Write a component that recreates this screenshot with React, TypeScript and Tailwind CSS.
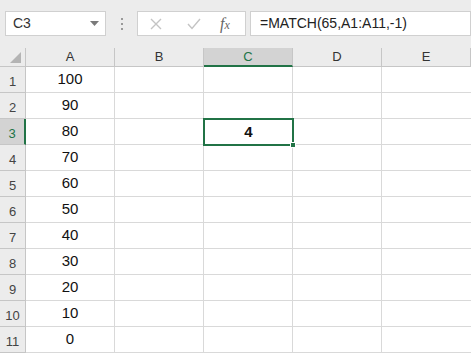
import React from 'react';

const cols = ['A', 'B', 'C', 'D', 'E'];
const values = ['100', '90', '80', '70', '60', '50', '40', '30', '20', '10', '0'];

const App: React.FC = () => {
  return (
    <div className="w-[471px] h-[353px] overflow-hidden bg-white text-[#222]" style={{ fontFamily: '"Liberation Sans", Arial, sans-serif' }}>
      {/* Formula bar */}
      <div className="h-[48px] bg-[#ececec] flex items-start pt-[11px]">
        <div className="ml-[5px] w-[101px] h-[25px] bg-white border border-[#d0d0d0] flex items-center justify-between pl-[7px] pr-[6px]">
          <span className="text-[14px] text-[#333]">C3</span>
          <svg width="9" height="5" viewBox="0 0 9 5">
            <path d="M0 0 L9 0 L4.5 5 Z" fill="#7a7a7a" />
          </svg>
        </div>
        <div className="w-[31px] h-[25px] flex flex-col items-center justify-center gap-[3px]">
          <span className="w-[2px] h-[2px] bg-[#999]" />
          <span className="w-[2px] h-[2px] bg-[#999]" />
          <span className="w-[2px] h-[2px] bg-[#999]" />
        </div>
        <div className="w-[109px] h-[25px] bg-white border border-[#d0d0d0] flex items-center">
          <svg className="ml-[12px]" width="12" height="12" viewBox="0 0 12 12">
            <path d="M1 1 L11 11 M11 1 L1 11" stroke="#c4c4c4" strokeWidth="1.4" />
          </svg>
          <svg className="ml-[25px]" width="14" height="12" viewBox="0 0 14 12">
            <path d="M1 6 L5 10.5 L13 1" stroke="#c4c4c4" strokeWidth="1.4" fill="none" />
          </svg>
          <span className="ml-[19px] text-[16px] italic text-[#666]" style={{ fontFamily: '"Liberation Serif", serif' }}>
            f<span className="text-[12px]">x</span>
          </span>
        </div>
        <div className="ml-[4px] flex-1 h-[25px] bg-white border border-[#d0d0d0] flex items-center pl-[9px]">
          <span className="text-[14px] text-[#222]">=MATCH(65,A1:A11,-1)</span>
        </div>
      </div>

      {/* Grid */}
      <div className="grid grid-cols-[26px_89px_89px_89px_89px_89px] grid-rows-[19px_repeat(11,26px)]">
        {/* corner */}
        <div className="bg-[#ececec] border-r border-b border-[#c6c6c6] relative">
          <svg className="absolute right-[4px] bottom-[3px]" width="11" height="11" viewBox="0 0 11 11">
            <path d="M11 0 L11 11 L0 11 Z" fill="#b4b4b4" />
          </svg>
        </div>
        {cols.map((c) => (
          <div
            key={c}
            className={
              c === 'C'
                ? 'bg-[#d3d3d3] border-r border-[#c6c6c6] border-b-2 border-b-[#217346] flex items-center justify-center text-[13px] text-[#217346]'
                : 'bg-[#ececec] border-r border-b border-[#c6c6c6] flex items-center justify-center text-[13px] text-[#333]'
            }
          >
            {c}
          </div>
        ))}
        {values.map((v, i) => (
          <React.Fragment key={i}>
            <div
              className={
                i === 2
                  ? 'bg-[#d3d3d3] border-r-2 border-r-[#217346] border-b border-[#c6c6c6] flex items-end justify-center pb-[1px] text-[13px] text-[#217346]'
                  : 'bg-[#ececec] border-r border-b border-[#c6c6c6] flex items-end justify-center pb-[1px] text-[13px] text-[#444]'
              }
            >
              {i + 1}
            </div>
            <div className="border-r border-b border-[#d9d9d9] flex items-center justify-center text-[15px] text-[#111]">{v}</div>
            <div className="border-r border-b border-[#d9d9d9]" />
            <div className="border-r border-b border-[#d9d9d9] relative">
              {i === 2 && (
                <div className="absolute -left-[1px] -top-[1px] w-[91px] h-[28px] border-2 border-[#217346] flex items-center justify-center text-[15px] font-bold text-[#111] z-10">
                  4
                  <span className="absolute -right-[4px] -bottom-[4px] w-[6px] h-[6px] bg-[#217346] border border-white" />
                </div>
              )}
            </div>
            <div className="border-r border-b border-[#d9d9d9]" />
            <div className="border-b border-[#d9d9d9]" />
          </React.Fragment>
        ))}
      </div>
    </div>
  );
};

export default App;
